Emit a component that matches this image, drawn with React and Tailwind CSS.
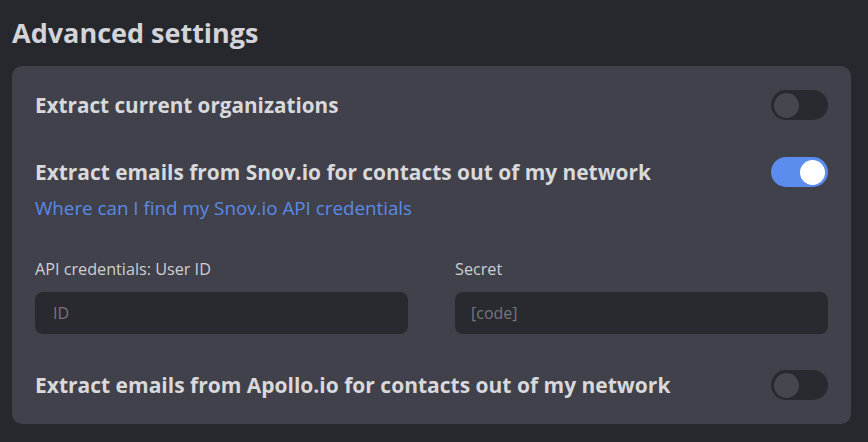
import React, { useState } from "react";

const Toggle = ({ on, onChange }) => (
  <button
    onClick={onChange}
    className={`relative flex h-[30px] w-[57px] shrink-0 items-center rounded-full px-[3px] ${
      on ? "bg-[#5b8def] justify-end" : "bg-[#292a2f] justify-start"
    }`}
  >
    <span
      className={`block h-[25px] w-[25px] rounded-full ${on ? "bg-white" : "bg-[#45464e]"}`}
    />
  </button>
);

export default function App() {
  const [orgs, setOrgs] = useState(false);
  const [snov, setSnov] = useState(true);
  const [apollo, setApollo] = useState(false);

  return (
    <div
      className="min-h-screen w-full bg-[#27282d] pl-3 pr-[17px] pt-[15px] pb-[19px]"
      style={{ fontFamily: "'Open Sans', 'Noto Sans', sans-serif" }}
    >
      <h1 className="text-[27px] font-bold leading-[36px] text-[#d4d4d8]">Advanced settings</h1>
      <div className="mt-[15px] rounded-[10px] bg-[#40414a] px-[23px] pt-[24px] pb-[24px]">
        <div className="flex items-center justify-between">
          <span className="text-[20.7px] font-bold leading-[30px] text-[#d9d9dc]">Extract current organizations</span>
          <Toggle on={orgs} onChange={() => setOrgs(!orgs)} />
        </div>

        <div className="mt-[37px] flex items-center justify-between">
          <span className="text-[20.9px] font-bold leading-[30px] text-[#d9d9dc]">
            Extract emails from Snov.io for contacts out of my network
          </span>
          <Toggle on={snov} onChange={() => setSnov(!snov)} />
        </div>
        <a href="#" className="mt-[8px] block text-[18.8px] leading-[26px] text-[#5b8ae6]">
          Where can I find my Snov.io API credentials
        </a>

        <div className="mt-[38px] grid grid-cols-2 gap-[47px]">
          <label className="flex flex-col">
            <span className="text-[16.2px] leading-[20px] text-[#cfcfd3]">API credentials: User ID</span>
            <input
              placeholder="ID"
              className="mt-[13px] h-[42px] rounded-[8px] bg-[#292a2f] px-[18px] text-[16px] text-[#cfcfd3] outline-none placeholder:text-[#75767d]"
            />
          </label>
          <label className="flex flex-col">
            <span className="text-[16.2px] leading-[20px] text-[#cfcfd3]">Secret</span>
            <input
              placeholder="[code]"
              className="mt-[13px] h-[42px] rounded-[8px] bg-[#292a2f] px-[16px] text-[16px] text-[#cfcfd3] outline-none placeholder:text-[#75767d]"
            />
          </label>
        </div>

        <div className="mt-[36px] flex items-center justify-between">
          <span className="text-[21px] font-bold leading-[30px] text-[#d9d9dc]">
            Extract emails from Apollo.io for contacts out of my network
          </span>
          <Toggle on={apollo} onChange={() => setApollo(!apollo)} />
        </div>
      </div>
    </div>
  );
}
